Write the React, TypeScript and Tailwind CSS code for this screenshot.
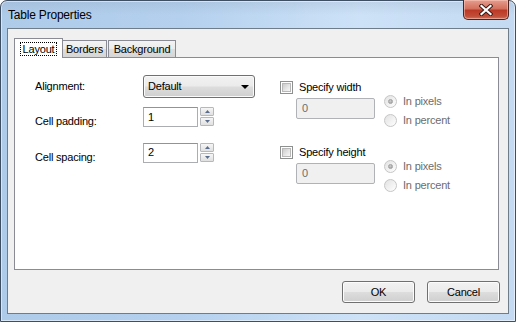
import React from "react";

const btnGrad =
  "bg-[linear-gradient(to_bottom,#f2f2f2_0%,#ebebeb_48%,#dddddd_52%,#cfcfcf_100%)]";

function Checkbox() {
  return (
    <div className="w-[13px] h-[13px] border border-[#8e8f8f] bg-white p-[1px] shrink-0">
      <div className="w-full h-full bg-[linear-gradient(135deg,#cbcbcb_0%,#e8e8e8_60%,#f7f7f7_100%)] border border-[#b8b8b8]" />
    </div>
  );
}

function Radio({ checked }: { checked?: boolean }) {
  return (
    <div className="w-[13px] h-[13px] rounded-full border border-[#c6c6c6] bg-[linear-gradient(135deg,#e2e2e2_0%,#f6f6f6_70%,#ffffff_100%)] flex items-center justify-center shrink-0">
      {checked && (
        <div className="w-[5px] h-[5px] rounded-full bg-[radial-gradient(circle_at_40%_35%,#d0d0d0,#9a9a9a)] border border-[#a0a0a0]" />
      )}
    </div>
  );
}

function Spin() {
  return (
    <div className="flex flex-col gap-[1px] ml-[2px]">
      {[0, 1].map((i) => (
        <div
          key={i}
          className="w-[14px] h-[9px] border border-[#b5b9be] rounded-[1px] bg-[linear-gradient(to_bottom,#f6f6f6,#e0e0e0)] flex items-center justify-center"
        >
          <svg width="5" height="3" viewBox="0 0 5 3">
            {i === 0 ? (
              <path d="M0 3 L2.5 0 L5 3 Z" fill="#5b6d8f" />
            ) : (
              <path d="M0 0 L2.5 3 L5 0 Z" fill="#5b6d8f" />
            )}
          </svg>
        </div>
      ))}
    </div>
  );
}

function NumInput({ value }: { value: string }) {
  return (
    <div className="flex items-start">
      <div className="w-[55px] h-[20px] border border-[#abadb3] border-t-[#8f949b] bg-white flex items-center pl-[4px] text-black">
        {value}
      </div>
      <Spin />
    </div>
  );
}

function DisabledField() {
  return (
    <div className="w-[79px] h-[21px] border border-[#b0b3b6] rounded-[2px] bg-[#f0f0f0] flex items-center pl-[5px] text-[#6d6d6d]">
      0
    </div>
  );
}

function SizeGroup({ label }: { label: string }) {
  return (
    <div className="flex flex-col">
      <div className="flex items-center h-[14px] gap-[6px]">
        <Checkbox />
        <span className="text-black">{label}</span>
      </div>
      <div className="flex items-start mt-[-2px] ml-[16px]">
        <div className="mt-[6px]">
          <DisabledField />
        </div>
        <div className="flex flex-col ml-[9px]">
          <div className="flex items-center h-[19px] gap-[6px]">
            <Radio checked />
            <span className="text-[#6d6d6d]">In pixels</span>
          </div>
          <div className="flex items-center h-[19px] gap-[6px]">
            <Radio />
            <span className="text-[#6d6d6d]">In percent</span>
          </div>
        </div>
      </div>
    </div>
  );
}

function Button({ children }: { children: React.ReactNode }) {
  return (
    <div
      className={`w-[73px] h-[22px] rounded-[3px] border border-[#707070] ${btnGrad} flex items-center justify-center text-black shadow-[inset_0_0_0_1px_#fcfcfc]`}
    >
      {children}
    </div>
  );
}

export default function App() {
  return (
    <div className="w-[516px] h-[322px] overflow-hidden bg-white">
      <div className="w-[516px] h-[322px] flex flex-col rounded-t-[7px] border border-[#3e4f63] bg-[linear-gradient(to_bottom,rgba(120,140,160,0.18)_0px,rgba(120,140,160,0)_14px),linear-gradient(to_right,#aecbea_0%,#b4d0ee_35%,#cde2f7_70%,#c3daf2_100%)] px-[6px] pb-[7px] font-['Liberation_Sans',Arial,sans-serif] text-[11px] tracking-[-0.2px] shadow-[inset_0_0_0_1px_rgba(255,255,255,0.5)]">
        {/* Title bar */}
        <div className="flex items-start h-[27px] shrink-0">
          <span className="pl-[1px] pt-[7px] text-[12px] leading-[14px] text-black tracking-[-0.2px]">
            Table Properties
          </span>
          <div className="ml-auto -mt-[1px] w-[46px] h-[20px] rounded-b-[5px] border border-[#4b2320] border-t-0 bg-[linear-gradient(to_bottom,#e59e8e_0%,#d4705e_45%,#bb3a27_55%,#c24e38_85%,#d0745a_100%)] flex items-center justify-center shadow-[inset_0_0_0_1px_rgba(255,210,200,0.5)]">
            <svg width="14" height="12" viewBox="0 0 14 12">
              <path d="M2.5 2 L11.5 10 M11.5 2 L2.5 10" stroke="#3b1a16" strokeWidth="4.2" strokeLinecap="square" />
              <path d="M2.5 2 L11.5 10 M11.5 2 L2.5 10" stroke="#ffffff" strokeWidth="2.2" strokeLinecap="square" />
            </svg>
          </div>
        </div>

        {/* Client area */}
        <div className="flex-1 flex flex-col border border-[#6f7c8a] bg-[#f0f0f0]">
          {/* Tabs */}
          <div className="flex items-end h-[20px] mt-[8px] ml-[6px] relative z-10">
            <div className="w-[49px] h-[20px] mb-[-1px] border border-b-0 border-[#898c95] bg-white flex justify-center pt-[3px]">
              <span className="h-[14px] px-[3px] outline outline-1 outline-dotted outline-black -outline-offset-1 leading-[14px] text-black">
                Layout
              </span>
            </div>
            <div className="w-[44px] h-[17px] border-t border-r border-[#898c95] bg-[linear-gradient(to_bottom,#f3f3f3_0%,#ebebeb_50%,#dddddd_51%,#d6d6d6_100%)] flex items-center justify-center text-black leading-[14px]">
              Borders
            </div>
            <div className="w-[68px] h-[17px] ml-[1px] border-t border-l border-r border-[#898c95] bg-[linear-gradient(to_bottom,#f3f3f3_0%,#ebebeb_50%,#dddddd_51%,#d6d6d6_100%)] flex items-center justify-center text-black leading-[14px]">
              Background
            </div>
          </div>

          {/* Panel */}
          <div className="ml-[6px] w-[485px] h-[213px] border border-[#898c95] bg-white flex">
            {/* Left column */}
            <div className="w-[265px] pl-[20px] pt-[17px] flex flex-col">
              <div className="flex items-center h-[23px]">
                <span className="w-[108px] text-black">Alignment:</span>
                <div className={`w-[112px] h-[23px] rounded-[3px] border border-[#707070] ${btnGrad} flex items-center pl-[4px] pr-[5px] text-black shadow-[inset_0_0_0_1px_#fafafa]`}>
                  <span>Default</span>
                  <svg className="ml-auto" width="8" height="4" viewBox="0 0 8 4">
                    <path d="M0 0 L8 0 L4 4 Z" fill="#000" />
                  </svg>
                </div>
              </div>
              <div className="flex items-start mt-[9px]">
                <span className="w-[108px] text-black pt-[6px]">Cell padding:</span>
                <NumInput value="1" />
              </div>
              <div className="flex items-start mt-[13px]">
                <span className="w-[108px] text-black pt-[6px]">Cell spacing:</span>
                <NumInput value="2" />
              </div>
            </div>

            {/* Right column */}
            <div className="flex flex-col pt-[22px]">
              <SizeGroup label="Specify width" />
              <div className="mt-[15px]">
                <SizeGroup label="Specify height" />
              </div>
            </div>
          </div>

          {/* Buttons */}
          <div className="flex justify-end gap-[12px] mt-[11px] mr-[8px]">
            <Button>OK</Button>
            <Button>Cancel</Button>
          </div>
        </div>
      </div>
    </div>
  );
}
